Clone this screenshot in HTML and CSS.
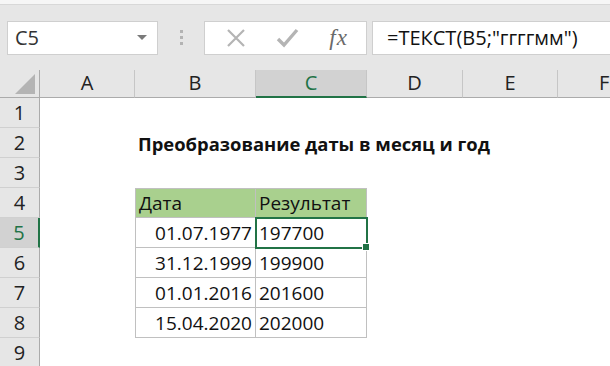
FILE: index.html
```html
<!DOCTYPE html>
<html lang="ru">

<head>
    <meta charset="UTF-8">
    <title>ТЕКСТ - месяц и год</title>
    <link rel="stylesheet" href="styles.css">
</head>

<body>

    <div class="ribbon-edge"></div>

    <div class="formula-bar">
        <div class="name-box">
            <span>C5</span>
            <span class="drop-arrow"></span>
        </div>
        <div class="grip">
            <span></span><span></span><span></span>
        </div>
        <div class="fx-buttons">
            <svg class="btn-icon" width="22" height="22" viewBox="0 0 22 22">
                <path d="M3 3 L19 19 M19 3 L3 19" stroke="#b4b4b4" stroke-width="2.2" fill="none" />
            </svg>
            <svg class="btn-icon" width="26" height="22" viewBox="0 0 26 22">
                <path d="M3 12 L9 18 L22 3" stroke="#b4b4b4" stroke-width="3.4" fill="none" />
            </svg>
            <span class="fx">fx</span>
        </div>
        <div class="formula-input">=ТЕКСТ(B5;"ггггмм")</div>
    </div>

    <div class="sheet">
        <div class="corner"><span class="corner-tri"></span></div>
        <div class="col-head">A</div>
        <div class="col-head">B</div>
        <div class="col-head active">C</div>
        <div class="col-head">D</div>
        <div class="col-head">E</div>
        <div class="col-head last">F</div>

        <div class="row-head">1</div>
        <div class="cell"></div><div class="cell"></div><div class="cell"></div><div class="cell"></div><div class="cell"></div><div class="cell"></div>

        <div class="row-head">2</div>
        <div class="cell"></div>
        <div class="cell title">Преобразование даты в месяц и год</div>
        <div class="cell"></div><div class="cell"></div><div class="cell"></div><div class="cell"></div>

        <div class="row-head">3</div>
        <div class="cell"></div><div class="cell"></div><div class="cell"></div><div class="cell"></div><div class="cell"></div><div class="cell"></div>

        <div class="row-head">4</div>
        <div class="cell"></div>
        <div class="cell tb head first top">Дата</div>
        <div class="cell tb head top">Результат</div>
        <div class="cell"></div><div class="cell"></div><div class="cell"></div>

        <div class="row-head active">5</div>
        <div class="cell"></div>
        <div class="cell tb date first">01.07.1977</div>
        <div class="cell tb selected">197700</div>
        <div class="cell"></div><div class="cell"></div><div class="cell"></div>

        <div class="row-head">6</div>
        <div class="cell"></div>
        <div class="cell tb date first">31.12.1999</div>
        <div class="cell tb">199900</div>
        <div class="cell"></div><div class="cell"></div><div class="cell"></div>

        <div class="row-head">7</div>
        <div class="cell"></div>
        <div class="cell tb date first">01.01.2016</div>
        <div class="cell tb">201600</div>
        <div class="cell"></div><div class="cell"></div><div class="cell"></div>

        <div class="row-head">8</div>
        <div class="cell"></div>
        <div class="cell tb date first">15.04.2020</div>
        <div class="cell tb">202000</div>
        <div class="cell"></div><div class="cell"></div><div class="cell"></div>

        <div class="row-head">9</div>
        <div class="cell"></div><div class="cell"></div><div class="cell"></div><div class="cell"></div><div class="cell"></div><div class="cell"></div>
    </div>

</body>

</html>
```

FILE: styles.css
```css
body {
    margin: 0;
    width: 610px;
    height: 366px;
    overflow: hidden;
    background-color: #ffffff;
    font-family: "Open Sans", "Noto Sans", sans-serif;
    color: #111;
}

.ribbon-edge {
    height: 4px;
    background-color: #f6f6f6;
    border-bottom: 1px solid #d8d8d8;
}

.formula-bar {
    display: flex;
    align-items: center;
    height: 65px;
    background-color: #e6e6e6;
    padding-left: 7px;
    box-sizing: border-box;
}

.name-box {
    display: flex;
    align-items: center;
    justify-content: space-between;
    width: 151px;
    height: 34px;
    box-sizing: border-box;
    padding: 0 10px 0 7px;
    background-color: #fff;
    border: 1px solid #cfcfcf;
    font-size: 20px;
    color: #333;
}

.drop-arrow {
    width: 0;
    height: 0;
    border-left: 5px solid transparent;
    border-right: 5px solid transparent;
    border-top: 5px solid #7a7a7a;
}

.grip {
    display: flex;
    flex-direction: column;
    gap: 3px;
    width: 46px;
    align-items: center;
}

.grip span {
    width: 3px;
    height: 3px;
    background-color: #b3b3b3;
}

.fx-buttons {
    display: flex;
    align-items: center;
    justify-content: space-around;
    width: 163px;
    height: 34px;
    box-sizing: border-box;
    padding: 0 4px 0 6px;
    background-color: #fff;
    border: 1px solid #cfcfcf;
}

.fx {
    font-family: "Liberation Serif", serif;
    font-style: italic;
    font-size: 23px;
    color: #6a6a6a;
    letter-spacing: 1px;
}

.formula-input {
    flex: 1;
    height: 34px;
    margin-left: 5px;
    box-sizing: border-box;
    padding-left: 14px;
    line-height: 32px;
    background-color: #fff;
    border: 1px solid #cfcfcf;
    border-right: none;
    font-size: 20px;
    color: #111;
    white-space: nowrap;
}

.sheet {
    display: grid;
    grid-template-columns: 40px 95px 121px 111px 96px 95px 52px;
    grid-template-rows: 28px repeat(9, 30px);
}

.corner {
    position: relative;
    background-color: #e6e6e6;
    border-right: 1px solid #ababab;
    border-bottom: 1px solid #ababab;
}

.corner-tri {
    position: absolute;
    right: 4px;
    bottom: 3px;
    width: 0;
    height: 0;
    border-left: 20px solid transparent;
    border-bottom: 20px solid #b4b4b4;
}

.col-head {
    display: flex;
    align-items: flex-end;
    justify-content: center;
    padding-bottom: 1px;
    background-color: #e6e6e6;
    border-right: 1px solid #c6c6c6;
    border-bottom: 1px solid #ababab;
    font-size: 20px;
    color: #222;
}

.col-head.last {
    justify-content: flex-start;
    padding-left: 41px;
    border-right: none;
    overflow: hidden;
}

.col-head.active {
    background-color: #d2d2d2;
    color: #217346;
    border-bottom: 2px solid #217346;
    padding-bottom: 0;
}

.row-head {
    display: flex;
    align-items: center;
    justify-content: center;
    background-color: #e6e6e6;
    border-right: 1px solid #ababab;
    border-bottom: 1px solid #d0d0d0;
    font-size: 20px;
    color: #222;
}

.row-head.active {
    background-color: #d2d2d2;
    color: #217346;
    border-right: 2px solid #217346;
}

.cell {
    display: flex;
    align-items: flex-end;
    padding: 0 3px 1px;
    font-size: 19px;
    white-space: nowrap;
    min-width: 0;
}

.title {
    font-weight: bold;
    font-size: 18.4px;
    padding-bottom: 2px;
    overflow: visible;
}

.tb {
    border-right: 1px solid #c0c0c0;
    border-bottom: 1px solid #c0c0c0;
}

.tb.first {
    border-left: 1px solid #c0c0c0;
}

.tb.top {
    border-top: 1px solid #c0c0c0;
}

.head {
    background-color: #a9d08e;
}

.date {
    justify-content: flex-end;
}

.selected {
    position: relative;
    outline: 2px solid #217346;
    outline-offset: -1px;
}

.selected::after {
    content: "";
    position: absolute;
    right: -4px;
    bottom: -4px;
    width: 6px;
    height: 6px;
    background-color: #217346;
    border: 1px solid #fff;
}
```
